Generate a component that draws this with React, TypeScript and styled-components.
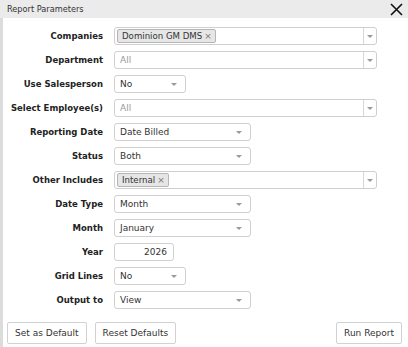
import React from 'react';
import styled, { createGlobalStyle } from 'styled-components';

const GlobalStyle = createGlobalStyle`
  html, body {
    margin: 0;
    padding: 0;
    background: #fff;
  }
  body {
    font-family: 'DejaVu Sans', Verdana, sans-serif;
    font-size: 9px;
    color: #333;
  }
`;

const Dialog = styled.div`
  width: 408px;
  height: 347px;
  display: flex;
  flex-direction: column;
  overflow: hidden;
`;

const TitleBar = styled.div`
  height: 18px;
  display: flex;
  align-items: center;
  justify-content: space-between;
  padding: 0 5px 0 7px;
  background: #ebebeb;
  color: #333;
  font-size: 8.2px;
`;

const CloseButton = styled.button`
  border: none;
  background: none;
  padding: 0;
  width: 14px;
  height: 14px;
  display: flex;
  align-items: center;
  justify-content: center;
  cursor: pointer;
`;

const Body = styled.div`
  flex: 1;
  border-left: 3px solid #dcdcdc;
  padding: 9px 6px 0 4px;
  display: flex;
  flex-direction: column;
`;

const Form = styled.div`
  display: grid;
  grid-template-columns: 96px 1fr;
  column-gap: 11px;
  row-gap: 6px;
  align-items: center;
  padding-right: 25px;
`;

const Label = styled.label`
  text-align: right;
  font-weight: bold;
  font-size: 8.5px;
  color: #222;
  white-space: nowrap;
`;

const Field = styled.div<{ width?: number; placeholder?: boolean }>`
  position: relative;
  box-sizing: border-box;
  height: 18px;
  width: ${(p) => (p.width ? `${p.width}px` : '100%')};
  border: 1px solid #cfcfcf;
  border-radius: 3px;
  background: #fff;
  display: flex;
  align-items: center;
  padding-left: 5px;
  color: ${(p) => (p.placeholder ? '#9a9a9a' : '#333')};
`;

const MultiField = styled(Field)`
  padding-left: 2px;
  padding-right: 14px;
`;

const ArrowZone = styled.span<{ divided?: boolean }>`
  position: absolute;
  top: 0;
  bottom: 0;
  width: 12px;
  display: flex;
  align-items: center;
  justify-content: center;
  border-left: ${(p) => (p.divided ? '1px solid #d6d6d6' : 'none')};
  right: ${(p) => (p.divided ? '0' : '5px')};
`;

const Caret = styled.span`
  width: 0;
  height: 0;
  border-left: 3px solid transparent;
  border-right: 3px solid transparent;
  border-top: 3px solid #9a9a9a;
`;

const Tag = styled.span`
  display: inline-flex;
  align-items: center;
  gap: 2px;
  height: 12px;
  padding: 0 3px 0 4px;
  background: #e6e6e6;
  border: 1px solid #b5b5b5;
  border-radius: 2px;
  color: #333;
  font-size: 8.6px;
`;

const TagX = styled.span`
  color: #777;
  font-size: 9px;
`;

const NumberInput = styled(Field)`
  justify-content: flex-end;
  padding-right: 6px;
`;

const Buttons = styled.div`
  display: flex;
  gap: 8px;
  margin-top: 13px;
`;

const Button = styled.button`
  height: 22px;
  box-sizing: border-box;
  padding: 0 7px;
  border: 1px solid #d2d2d2;
  border-radius: 2px;
  background: #fff;
  font-family: inherit;
  font-size: 9px;
  color: #333;
  cursor: pointer;
`;

const Spacer = styled.div`
  flex: 1;
`;

const Select = ({ value, width, placeholder }: { value: string; width: number; placeholder?: boolean }) => (
  <Field width={width} placeholder={placeholder}>
    {value}
    <ArrowZone>
      <Caret />
    </ArrowZone>
  </Field>
);

const Multi = ({ tag, text }: { tag?: string; text?: string }) => (
  <MultiField placeholder={!tag}>
    {tag ? (
      <Tag>
        {tag}
        <TagX>×</TagX>
      </Tag>
    ) : (
      <span style={{ paddingLeft: 3 }}>{text}</span>
    )}
    <ArrowZone divided>
      <Caret />
    </ArrowZone>
  </MultiField>
);

const App = () => (
  <>
    <GlobalStyle />
    <Dialog>
      <TitleBar>
        Report Parameters
        <CloseButton aria-label='close'>
          <svg width='13' height='13' viewBox='0 0 13 13'>
            <path d='M1 1 L12 12 M12 1 L1 12' stroke='#111' strokeWidth='1.6' />
          </svg>
        </CloseButton>
      </TitleBar>
      <Body>
        <Form>
          <Label>Companies</Label>
          <Multi tag='Dominion GM DMS' />
          <Label>Department</Label>
          <Multi text='All' />
          <Label>Use Salesperson</Label>
          <Select value='No' width={72} />
          <Label>Select Employee(s)</Label>
          <Multi text='All' />
          <Label>Reporting Date</Label>
          <Select value='Date Billed' width={137} />
          <Label>Status</Label>
          <Select value='Both' width={137} />
          <Label>Other Includes</Label>
          <Multi tag='Internal' />
          <Label>Date Type</Label>
          <Select value='Month' width={137} />
          <Label>Month</Label>
          <Select value='January' width={137} />
          <Label>Year</Label>
          <NumberInput width={60}>2026</NumberInput>
          <Label>Grid Lines</Label>
          <Select value='No' width={72} />
          <Label>Output to</Label>
          <Select value='View' width={137} />
        </Form>
        <Buttons>
          <Button>Set as Default</Button>
          <Button>Reset Defaults</Button>
          <Spacer />
          <Button>Run Report</Button>
        </Buttons>
      </Body>
    </Dialog>
  </>
);

export default App;
